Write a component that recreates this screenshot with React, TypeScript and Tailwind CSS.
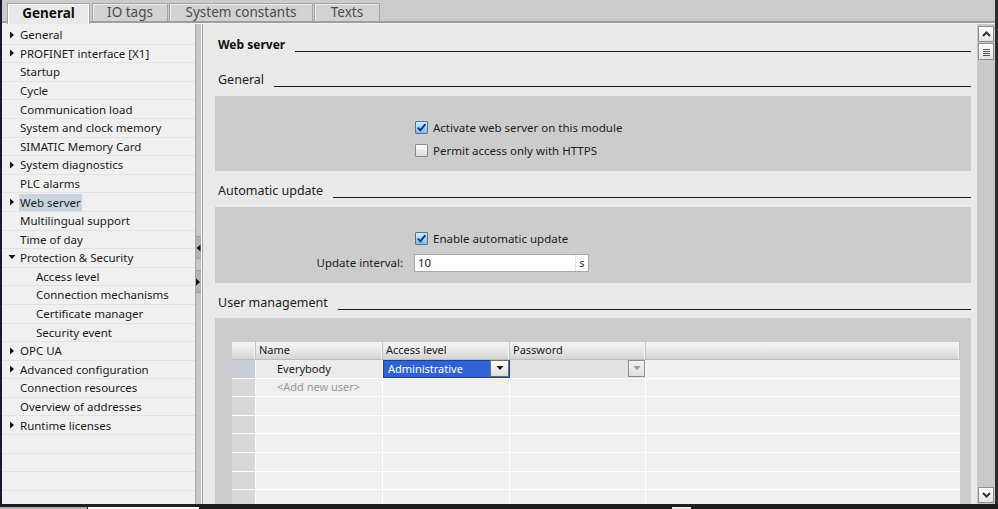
import React from 'react';

type TreeItem = { t: string; arrow?: 'right' | 'down'; lvl?: number; sel?: boolean };

const tree: TreeItem[] = [
  { t: 'General', arrow: 'right' },
  { t: 'PROFINET interface [X1]', arrow: 'right' },
  { t: 'Startup' },
  { t: 'Cycle' },
  { t: 'Communication load' },
  { t: 'System and clock memory' },
  { t: 'SIMATIC Memory Card' },
  { t: 'System diagnostics', arrow: 'right' },
  { t: 'PLC alarms' },
  { t: 'Web server', arrow: 'right', sel: true },
  { t: 'Multilingual support' },
  { t: 'Time of day' },
  { t: 'Protection & Security', arrow: 'down' },
  { t: 'Access level', lvl: 2 },
  { t: 'Connection mechanisms', lvl: 2 },
  { t: 'Certificate manager', lvl: 2 },
  { t: 'Security event', lvl: 2 },
  { t: 'OPC UA', arrow: 'right' },
  { t: 'Advanced configuration', arrow: 'right' },
  { t: 'Connection resources' },
  { t: 'Overview of addresses' },
  { t: 'Runtime licenses', arrow: 'right' },
  { t: '' },
  { t: '' },
  { t: '' },
  { t: '' },
];

const RightTri = ({ color = '#111' }: { color?: string }) => (
  <svg width="5" height="8" viewBox="0 0 5 8">
    <polygon points="0,0.5 4,4 0,7.5" fill={color} />
  </svg>
);
const DownTri = ({ color = '#111' }: { color?: string }) => (
  <svg width="8" height="5" viewBox="0 0 8 5">
    <polygon points="0.5,0 7.5,0 4,4" fill={color} />
  </svg>
);

const Check = ({ checked }: { checked?: boolean }) =>
  checked ? (
    <div className="w-[13px] h-[13px] border border-[#52739a] rounded-[1px] bg-linear-to-b from-[#d3ebfc] to-[#7fb8e8] flex items-center justify-center">
      <svg width="11" height="11" viewBox="0 0 11 11">
        <path d="M1.8 5.6 L4.4 8.2 L9.4 2.2" stroke="#16407c" strokeWidth="2" fill="none" />
      </svg>
    </div>
  ) : (
    <div className="w-[13px] h-[13px] border border-[#8a8a8a] rounded-[1px] bg-linear-to-b from-[#fdfdfd] to-[#d9d9d9]" />
  );

const Tab = ({ label, active, w }: { label: string; active?: boolean; w: string }) =>
  active ? (
    <div className={`${w} h-[21px] bg-[#e9e9e9] border border-b-0 border-[#a4a4a4] shadow-[inset_1px_1px_0_#ffffff,inset_-1px_0_0_#ffffff] flex items-center justify-center text-[13.5px] font-bold text-[#111] pb-[2px]`}>
      {label}
    </div>
  ) : (
    <div className={`${w} h-[18px] mb-[3px] bg-[#d2d2d2] border border-b-0 border-[#a4a4a4] shadow-[inset_1px_1px_0_#ececec] flex items-center justify-center text-[13.5px] text-[#4b4b4b]`}>
      {label}
    </div>
  );

const Heading = ({ text, bold, mt }: { text: string; bold?: boolean; mt: string }) => (
  <div className={`flex items-center h-[20px] pl-[15px] pr-[6px] shrink-0 ${mt}`}>
    <span className={bold ? 'text-[12px] font-bold text-[#111] whitespace-nowrap' : 'text-[12.5px] text-[#1c1c1c] whitespace-nowrap'}>{text}</span>
    <div className="flex-1 h-px bg-[#1a1a1a] ml-[10px] mt-[12px]" />
  </div>
);

const DropBtn = ({ dark }: { dark?: boolean }) => (
  <div
    className={
      dark
        ? 'w-[19px] h-[17px] bg-linear-to-b from-[#ffffff] to-[#dcdcdc] border border-[#6d6d6d] flex items-center justify-center'
        : 'w-[17px] h-[17px] bg-linear-to-b from-[#f4f4f4] to-[#dedede] border border-[#8c8c8c] flex items-center justify-center'
    }
  >
    <DownTri color={dark ? '#111' : '#9a9a9a'} />
  </div>
);

const cols = ['w-[24px]', 'w-[127px]', 'w-[127px]', 'w-[136px]', 'flex-1'];

export default function App() {
  const bodyRows = Array.from({ length: 8 });
  return (
    <div className="w-[998px] h-[509px] bg-[#1e1e1e] flex flex-col overflow-hidden font-['Noto_Sans',sans-serif] text-[#1c1c1c]">
      <div className="flex h-[504px]">
        <div className="w-[2px] bg-[#151b2b]" />
        <div className="w-[993px] flex flex-col">
          {/* tab bar */}
          <div className="h-[24px] flex items-end pl-[5px] gap-[1px] bg-[#cbcbcb] shadow-[inset_0_-1px_0_#f4f4f4,inset_0_-3px_0_#9e9e9e]">
            <Tab label="General" active w="w-[83px] mr-[1px]" />
            <Tab label="IO tags" w="w-[76px]" />
            <Tab label="System constants" w="w-[144px]" />
            <Tab label="Texts" w="w-[66px]" />
          </div>
          {/* body */}
          <div className="flex h-[480px]">
            {/* left tree */}
            <div className="w-[193px] bg-[#f0f0f0] flex flex-col pt-[2px] overflow-hidden">
              {tree.map((it, i) => (
                <div key={i} className="h-[18.6px] shrink-0 border-b border-[#e2e2e2] flex items-center text-[11.5px] text-[#1a1a1a] whitespace-nowrap">
                  {it.lvl === 2 ? (
                    <div className="w-[34px]" />
                  ) : (
                    <>
                      <div className="w-[6px]" />
                      <div className="w-[12px] flex items-center">
                        {it.arrow === 'right' && <div className="pl-[2px] flex"><RightTri /></div>}
                        {it.arrow === 'down' && <DownTri />}
                      </div>
                    </>
                  )}
                  {it.sel ? (
                    <span className="bg-[#c8d5e1] h-[17px] -ml-[1px] px-[1px] flex items-center">{it.t}</span>
                  ) : (
                    <span>{it.t}</span>
                  )}
                </div>
              ))}
            </div>
            {/* splitter */}
            <div className="w-[8px] flex">
              <div className="w-px bg-[#a6a6a6]" />
              <div className="w-[5px] bg-[#c6c6c6] flex flex-col">
                <div className="h-[212px]" />
                <div className="h-[23px] bg-[#b3b3b3] border-y border-[#9c9c9c] flex items-center">
                  <svg width="5" height="8" viewBox="0 0 5 8"><polygon points="4.5,0.5 0.5,4 4.5,7.5" fill="#111" /></svg>
                </div>
                <div className="h-[11px]" />
                <div className="h-[23px] bg-[#b3b3b3] border-y border-[#9c9c9c] flex items-center">
                  <RightTri />
                </div>
              </div>
              <div className="w-px bg-[#fbfbfb]" />
              <div className="w-px bg-[#a8a8a8]" />
            </div>
            {/* content */}
            <div className="w-[774px] bg-[#e9e9e9] flex flex-col">
              <Heading text="Web server" bold mt="mt-[11px]" />
              <Heading text="General" mt="mt-[15px]" />
              <div className="ml-[12px] mr-[6px] mt-[6px] h-[75px] bg-[#cccccc] pt-[20px] text-[11.5px] shrink-0">
                <div className="h-[23px] flex items-center pl-[200px]">
                  <Check checked />
                  <span className="ml-[5px]">Activate web server on this module</span>
                </div>
                <div className="h-[23px] flex items-center pl-[200px]">
                  <Check />
                  <span className="ml-[5px]">Permit access only with HTTPS</span>
                </div>
              </div>
              <Heading text="Automatic update" mt="mt-[10px]" />
              <div className="ml-[12px] mr-[6px] mt-[6px] h-[76px] bg-[#cccccc] pt-[20px] text-[11.5px] shrink-0">
                <div className="h-[23px] flex items-center pl-[200px]">
                  <Check checked />
                  <span className="ml-[5px]">Enable automatic update</span>
                </div>
                <div className="mt-[4px] h-[18px] flex items-center">
                  <div className="w-[188px] text-right">Update interval:</div>
                  <div className="ml-[11px] w-[175px] h-[18px] bg-white border border-[#a6a6a6] flex items-center">
                    <span className="pl-[3px] flex-1">10</span>
                    <span className="w-[13px] h-full border-l border-[#e6e6e6] flex items-center justify-center text-[11px] text-[#333]">s</span>
                  </div>
                </div>
              </div>
              <Heading text="User management" mt="mt-[10px]" />
              <div className="ml-[12px] mr-[6px] mt-[5px] flex-1 bg-[#cccccc] pt-[24px] pl-[17px] pr-[11px] overflow-hidden min-h-0">
                {/* table header */}
                <div className="flex h-[18px] text-[11px] text-[#1c1c1c] bg-linear-to-b from-[#f5f5f5] via-[#e8e8e8] to-[#d3d3d3] border-b border-[#bdbdbd]">
                  {['', 'Name', 'Access level', 'Password', ''].map((h, i) => (
                    <div key={i} className={`${cols[i]} h-full border-r border-[#c4c4c4] shadow-[inset_-1px_0_0_#f8f8f8] flex items-center pl-[3px]`}>
                      {h}
                    </div>
                  ))}
                </div>
                {bodyRows.map((_, r) => (
                  <div key={r} className="flex h-[18.6px] border-b border-white text-[11px]">
                    <div className={`${cols[0]} h-full border-r border-white ${r === 0 ? 'bg-[#c4cdd8]' : 'bg-[#d7d7d7]'}`} />
                    <div className={`${cols[1]} h-full border-r border-white flex items-center pl-[21px] ${r === 0 ? 'bg-[#ebebeb]' : 'bg-[#efefef]'}`}>
                      {r === 0 && <span className="text-[#1a1a1a]">Everybody</span>}
                      {r === 1 && <span className="text-[#9a9a9a]">&lt;Add new user&gt;</span>}
                    </div>
                    {r === 0 ? (
                      <div className={`${cols[2]} h-full border border-[#1d3f94] bg-[#2f63d3] flex items-center justify-between pl-[4px] text-white`}>
                        <span>Administrative</span>
                        <DropBtn dark />
                      </div>
                    ) : (
                      <div className={`${cols[2]} h-full border-r border-white bg-[#efefef]`} />
                    )}
                    {r === 0 ? (
                      <div className={`${cols[3]} h-full border-r border-white bg-[#e2e2e2] flex items-center justify-end`}>
                        <DropBtn />
                      </div>
                    ) : (
                      <div className={`${cols[3]} h-full border-r border-white bg-[#efefef]`} />
                    )}
                    <div className={`${cols[4]} h-full bg-[#efefef]`} />
                  </div>
                ))}
              </div>
            </div>
            {/* scrollbar */}
            <div className="w-[18px] bg-[#c9c9c9] flex flex-col items-center pt-[2px] pb-[1px]">
              <div className="w-[16px] h-[16px] border border-[#8d8d8d] bg-linear-to-b from-[#ffffff] to-[#e2e2e2] flex items-center justify-center">
                <svg width="9" height="6" viewBox="0 0 9 6"><path d="M1 5 L4.5 1.5 L8 5" stroke="#333" strokeWidth="2" fill="none" /></svg>
              </div>
              <div className="w-[16px] h-[17px] mt-[1px] border border-[#8d8d8d] bg-linear-to-b from-[#ffffff] to-[#e2e2e2] flex items-center justify-center">
                <svg width="9" height="8" viewBox="0 0 9 8">
                  <path d="M1 1.5 H8 M1 3.5 H8 M1 5.5 H8 M1 7.5 H8" stroke="#555" strokeWidth="1" />
                </svg>
              </div>
              <div className="flex-1" />
              <div className="w-[16px] h-[16px] border border-[#8d8d8d] bg-linear-to-b from-[#ffffff] to-[#e2e2e2] flex items-center justify-center">
                <svg width="9" height="6" viewBox="0 0 9 6"><path d="M1 1 L4.5 4.5 L8 1" stroke="#333" strokeWidth="2" fill="none" /></svg>
              </div>
            </div>
          </div>
        </div>
        <div className="w-[3px] bg-[#2c2c2c]" />
      </div>
      <div className="h-[5px] flex flex-col">
        <div className="h-[3px]" />
        <div className="h-[2px] flex">
          <div className="w-[87px] bg-[#b4b4b4]" />
          <div className="w-[1px]" />
          <div className="w-[111px] bg-[#f5f5f5]" />
          <div className="w-[473px]" />
          <div className="w-[19px] bg-[#e8e8e8]" />
        </div>
      </div>
    </div>
  );
}
